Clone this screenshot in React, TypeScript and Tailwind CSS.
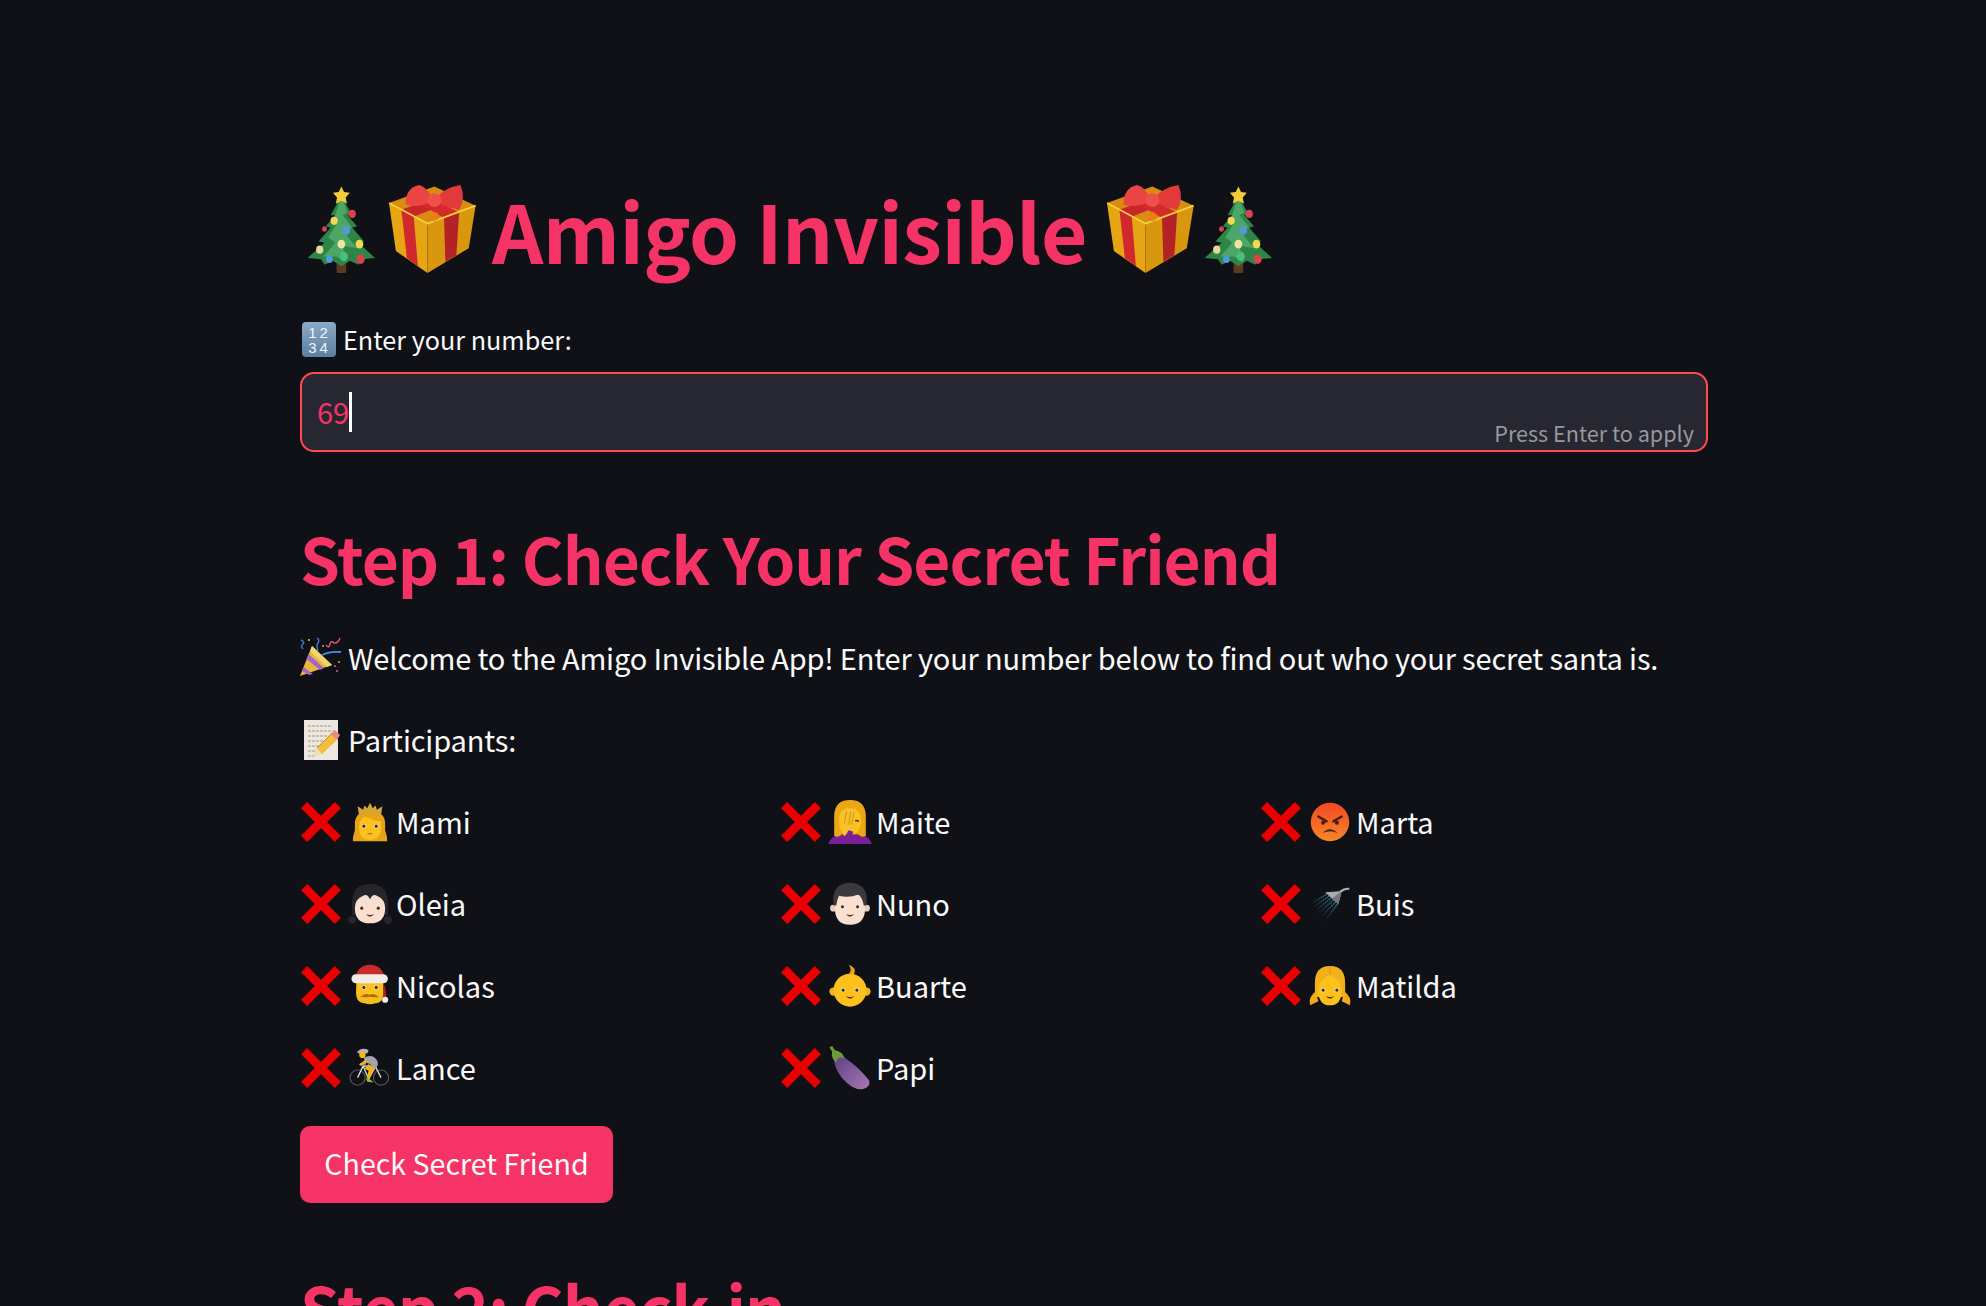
import type { ReactNode } from "react";

const FONT = "font-['Noto_Sans_CJK_SC','Liberation_Sans',sans-serif]";

function Svg({ className, children }: { className: string; children: ReactNode }) {
  return (
    <svg viewBox="0 0 64 64" className={`block shrink-0 ${className}`} aria-hidden="true">
      {children}
    </svg>
  );
}

function Cross() {
  return (
    <Svg className="ml-px h-10 w-10">
      <path d="M10 10 L54 54 M54 10 L10 54" stroke="#ea0000" strokeWidth="14" strokeLinecap="square" fill="none" />
    </Svg>
  );
}

function Tree({ className }: { className: string }) {
  return (
    <Svg className={className}>
      <g transform="translate(33 0) scale(0.875 1) translate(-33 0)">
        <rect x="29" y="54" width="8" height="10" rx="1" fill="#5c3a21" />
        <path d="M33 8 L42 22 L38 22 L46 30 L42 31 L52 41 L47 42 L61 53 L50 54 L47 58 L40 55 L33 59 L26 55 L19 58 L16 54 L5 53 L19 42 L14 41 L24 31 L20 30 L28 22 L24 22 Z" fill="#2f8448" />
        <path d="M33 8 L38 20 L34 22 L42 31 L34 33 L46 46 L34 44 L37 56 L29 52 L18 52 L28 42 L22 38 L30 27 L27 24 Z" fill="#4ca766" />
        <path d="M33 1 L35.2 5 L40 5.6 L36.6 9 L37.6 13.6 L33 11.4 L28.4 13.6 L29.4 9 L26 5.6 L30.8 5 Z" fill="#f4cc3a" />
        <circle cx="42" cy="21" r="3" fill="#d8434e" />
        <circle cx="27" cy="26" r="3" fill="#f0d954" />
        <circle cx="19" cy="32" r="2" fill="#d8434e" />
        <circle cx="37" cy="33" r="3.2" fill="#4f9bd9" />
        <circle cx="33" cy="43" r="3.2" fill="#f0e3a0" />
        <circle cx="48" cy="43" r="3.2" fill="#f2d94d" />
        <circle cx="15" cy="47" r="3" fill="#e6d79a" />
        <circle cx="35" cy="52" r="3.4" fill="#49c077" />
        <circle cx="49" cy="54" r="3.4" fill="#d8434e" />
        <circle cx="23" cy="54" r="2.8" fill="#4f9bd9" />
      </g>
    </Svg>
  );
}

function Gift({ className }: { className: string }) {
  return (
    <Svg className={className}>
      <path d="M0 13 L33 1 L63 15 L28 28 Z" fill="#d98c12" />
      <path d="M0 13 L28 28 L28 64 L5 48 Z" fill="#e8a513" />
      <path d="M63 15 L28 28 L28 64 L58 46 Z" fill="#d9960f" />
      <path d="M9 18 L18 23 L21 59 L13 53 Z" fill="#d0282c" />
      <path d="M40 24 L51 20 L49 51 L41 56 Z" fill="#b52225" />
      <path d="M9 18 L42 6 L51 10 L18 23 Z" fill="#c9262a" />
      <path d="M40 24 L51 20 L24 6 L14 9 Z" fill="#d42a2c" />
      <path d="M0 13 L28 28 L63 15" stroke="#f7d23e" strokeWidth="1.2" fill="none" />
      <path d="M29 13 Q18 17 12 14 Q12 2 22 0 Q28 2 31 9 Z" fill="#ea4544" />
      <path d="M35 9 Q40 2 52 0 Q56 10 51 18 Q42 16 35 13 Z" fill="#e23a3b" />
      <circle cx="33" cy="11" r="5" fill="#f0504c" />
      <circle cx="33" cy="23" r="3.5" fill="#ef7a18" opacity="0.7" />
    </Svg>
  );
}

function Numbers() {
  return (
    <svg viewBox="0 0 34 36" className="block h-9 w-[34px] shrink-0" aria-hidden="true">
      <defs>
        <linearGradient id="numBg" x1="0" y1="0" x2="0" y2="1">
          <stop offset="0" stopColor="#8aaac8" />
          <stop offset="1" stopColor="#5b7f9f" />
        </linearGradient>
      </defs>
      <rect width="34" height="35" rx="4" fill="url(#numBg)" />
      <text x="17.5" y="15.5" textAnchor="middle" fontSize="15" fill="#eef3f8" fontFamily="Liberation Sans" letterSpacing="3">12</text>
      <text x="17.5" y="31" textAnchor="middle" fontSize="15" fill="#eef3f8" fontFamily="Liberation Sans" letterSpacing="3">34</text>
    </svg>
  );
}

function Party() {
  return (
    <svg viewBox="0 0 42 42" className="block h-[42px] w-[42px] shrink-0" aria-hidden="true">
      <path d="M0 39 L12 9 L32 28 Z" fill="#e9b63e" />
      <path d="M8.5 17 L24 31 L20 33 L6.5 22 Z" fill="#a763c9" />
      <path d="M3.5 30 L13 37 L9 38 L2 34 Z" fill="#a763c9" />
      <path d="M12 9 L32 28 L27 30 L10 14 Z" fill="#f2d56e" />
      <path d="M1 3 Q5 5 3 7 Q0 9 3 12 M17 1 Q20 3 18 6 Q16 8 18 14" stroke="#3f7fe0" strokeWidth="1.4" fill="none" />
      <path d="M26 8 Q29 12 30 7 Q31 3 34 6 Q38 7 40 1" stroke="#e04f7d" strokeWidth="1.4" fill="none" />
      <path d="M22 18 Q30 14 41 15" stroke="#3f8ff0" strokeWidth="1.8" fill="none" />
      <circle cx="9" cy="3" r="1" fill="#f2d040" />
      <circle cx="39" cy="25" r="1" fill="#e8a13a" />
      <circle cx="37" cy="34" r="1" fill="#e0579a" />
      <circle cx="35" cy="29" r="1" fill="#e0579a" />
      <circle cx="23" cy="9" r="1" fill="#e8a13a" />
    </svg>
  );
}

function Memo() {
  return (
    <svg viewBox="0 0 36 40" className="block h-10 w-9 shrink-0" aria-hidden="true">
      <rect width="34" height="40" fill="#ece8df" />
      <path d="M4 6 H28 M4 11 H30 M4 16 H24 M4 21 H26 M4 26 H18 M4 31 H12 M4 36 H10" stroke="#8b8578" strokeWidth="0.8" strokeDasharray="3 1" />
      <path d="M10 36 L13 28 L28 13 L34 19 L18 34 Z" fill="#f2bd3c" />
      <path d="M10 36 L13 28 L18 34 Z" fill="#f3dfb5" />
      <path d="M27 14 L31 10 L36 15 L33 20 Z" fill="#e88a8a" />
      <path d="M13 28 L28 13" stroke="#c98a1e" strokeWidth="1" />
    </svg>
  );
}

function Eyes({ y = 34, cx = 32, gap = 10 }: { y?: number; cx?: number; gap?: number }) {
  return (
    <>
      <circle cx={cx - gap} cy={y} r="3.2" fill="#f3ead7" />
      <circle cx={cx + gap} cy={y} r="3.2" fill="#f3ead7" />
      <circle cx={cx - gap} cy={y} r="2.2" fill="#3d2a1c" />
      <circle cx={cx + gap} cy={y} r="2.2" fill="#3d2a1c" />
    </>
  );
}

function Smile({ y = 45 }: { y?: number }) {
  return <path d={`M26 ${y} Q32 ${y + 7} 38 ${y} Q32 ${y + 2} 26 ${y} Z`} fill="#6b3416" />;
}

function Princess() {
  return (
    <Svg className="h-11 w-11">
      <path d="M7 60 Q7 52 10 44 V32 Q12 16 32 16 Q52 16 54 32 V44 Q57 52 57 60 Z" fill="#e8a417" />
      <path d="M16 22 L14 9 L22 14 L24 8 L28 12 L32 4 L36 12 L40 8 L42 14 L50 9 L48 22 Q32 17 16 22 Z" fill="#d4a63a" />
      <path d="M16 38 Q17 26 26 24 Q36 31 48 31 V40 Q48 58 32 58 Q16 58 16 38 Z" fill="#fcc21b" />
      <Eyes y={38} gap={9} />
      <path d="M27 48 Q32 52 37 48 Q32 49 27 48 Z" fill="#a85a24" />
    </Svg>
  );
}

function Oleia() {
  return (
    <Svg className="h-11 w-11">
      <circle cx="6" cy="55" r="6" fill="#26262a" />
      <circle cx="58" cy="55" r="6" fill="#26262a" />
      <path d="M6 48 V30 Q6 3 32 3 Q58 3 58 30 V48 Z" fill="#26262a" />
      <path d="M10 38 Q10 25 22 20 Q28 16 32 25 Q36 16 42 20 Q54 25 54 38 Q54 60 32 60 Q10 60 10 38 Z" fill="#f8dfd0" />
      <Eyes y={38} gap={12} />
      <Smile y={47} />
    </Svg>
  );
}

function Santa() {
  return (
    <Svg className="h-11 w-11">
      <path d="M44 22 Q54 30 53 50" stroke="#a81f1f" strokeWidth="5" fill="none" />
      <circle cx="54" cy="52" r="4.5" fill="#ececec" />
      <path d="M12 36 V46 Q14 57 24 57 Q32 60 40 57 Q50 57 51 46 V36 Z" fill="#f5be1e" />
      <path d="M10 22 Q14 1 32 1 Q50 1 54 22 Z" fill="#c92a2a" />
      <path d="M12 26 H51 V44 H12 Z" fill="#fcc21b" />
      <rect x="5" y="15" width="53" height="13" rx="6.5" fill="#f0ece6" />
      <Eyes y={34} gap={9} />
      <path d="M18 48 Q26 41 31.5 45 Q37 41 45 48 Q38 49 31.5 47.5 Q25 49 18 48 Z" fill="#a8700f" />
    </Svg>
  );
}

function Cyclist() {
  return (
    <Svg className="h-11 w-11">
      <circle cx="14" cy="46" r="11" fill="none" stroke="#55585e" strokeWidth="1.6" />
      <circle cx="48" cy="46" r="11" fill="none" stroke="#55585e" strokeWidth="1.6" />
      <path d="M14 46 L22 29 L40 30 L48 46 M22 29 L30 48 L40 30 M18 26 H26" stroke="#e2e2e2" strokeWidth="1.8" fill="none" />
      <path d="M13 9 Q20 1 30 6 L28 11 L16 11 Z" fill="#b4b5b9" />
      <circle cx="21" cy="13" r="4.6" fill="#f4b818" />
      <path d="M23 17 Q36 10 43 22 Q45 30 38 34 L32 26 L25 24 Z" fill="#a2a4a9" />
      <path d="M16 27 L25 20 L28 23 L19 29 Z" fill="#f2b318" />
      <path d="M30 26 L39 33 L36 38 L31 48 L27 46 L30 36 L24 33 Z" fill="#f2b318" />
      <path d="M26 47 L33 49 L37 53 L28 52 Z" fill="#86c440" />
    </Svg>
  );
}

function Facepalm() {
  return (
    <Svg className="h-11 w-11">
      <path d="M0 64 Q4 52 18 50 L46 50 Q60 52 64 64 Z" fill="#7a1f96" />
      <path d="M9 52 V24 Q9 0 32 0 Q55 0 55 24 V52 Q50 56 44 50 H20 Q14 56 9 52 Z" fill="#eda616" />
      <path d="M16 30 Q16 12 32 12 Q48 12 48 30 Q48 50 32 50 Q16 50 16 30 Z" fill="#fcc21b" />
      <path d="M36 32 Q40 28 45 31" stroke="#3d2a1c" strokeWidth="2" fill="none" />
      <path d="M20 18 L28 11 L34 14 L40 12 L42 20 L37 40 L34 50 L24 54 L17 38 Z" fill="#f8c12a" />
      <path d="M27 16 L24 34 M33 17 L30 36 M38 18 L34 36" stroke="#c98d12" strokeWidth="1.2" fill="none" />
      <path d="M22 64 Q32 62 37 46 L30 44 Q26 54 12 60 Z" fill="#7a1f96" />
    </Svg>
  );
}

function Nuno() {
  return (
    <Svg className="h-11 w-11">
      <circle cx="8" cy="38" r="5" fill="#ecccba" />
      <circle cx="56" cy="38" r="5" fill="#ecccba" />
      <path d="M10 38 Q10 24 14 18 H50 Q54 24 54 38 Q54 62 32 62 Q10 62 10 38 Z" fill="#f8dfd0" />
      <path d="M8 34 Q4 2 32 1 Q60 2 56 34 L52 34 Q50 22 44 18 Q30 24 16 20 Q13 26 12 34 Z" fill="#3a3a3e" />
      <Eyes y={36} gap={11} />
      <Smile y={47} />
    </Svg>
  );
}

function Baby() {
  return (
    <Svg className="h-11 w-11">
      <circle cx="8" cy="40" r="6" fill="#eeb01b" />
      <circle cx="56" cy="40" r="6" fill="#eeb01b" />
      <circle cx="32" cy="38" r="24" fill="#fcc21b" />
      <path d="M30 1 Q42 5 38 15 Q34 16 30 15 Q36 8 30 1 Z" fill="#eba916" />
      <Eyes y={38} gap={10} />
      <Smile y={47} />
    </Svg>
  );
}

function Eggplant() {
  return (
    <Svg className="h-11 w-11">
      <defs>
        <linearGradient id="eggBody" x1="0" y1="0" x2="1" y2="1">
          <stop offset="0" stopColor="#5b3f83" />
          <stop offset="1" stopColor="#a878b4" />
        </linearGradient>
      </defs>
      <path d="M8 14 Q18 10 26 18 Q46 32 60 50 Q62 60 50 63 Q36 64 20 46 Q8 30 8 14 Z" fill="url(#eggBody)" />
      <path d="M2 2 L6 0 L10 6 Q22 8 24 18 Q14 14 12 24 Q4 18 6 8 Z" fill="#6d9b3a" />
    </Svg>
  );
}

function Angry() {
  return (
    <Svg className="h-11 w-11">
      <defs>
        <linearGradient id="angryBg" x1="0" y1="0" x2="0" y2="1">
          <stop offset="0" stopColor="#f24a23" />
          <stop offset="1" stopColor="#f7862a" />
        </linearGradient>
      </defs>
      <circle cx="32" cy="32" r="28" fill="url(#angryBg)" />
      <path d="M15 24 L27 31 M49 24 L37 31" stroke="#4e1c0c" strokeWidth="3.6" strokeLinecap="round" />
      <circle cx="22" cy="33" r="3" fill="#4e1c0c" />
      <circle cx="42" cy="33" r="3" fill="#4e1c0c" />
      <path d="M21 48 Q32 37 43 48 Q32 43 21 48 Z" fill="#4e1c0c" />
    </Svg>
  );
}

function Shower() {
  return (
    <Svg className="h-11 w-11">
      <defs>
        <linearGradient id="spray" gradientUnits="userSpaceOnUse" x1="38" y1="22" x2="14" y2="46">
          <stop offset="0" stopColor="#2f9fb4" />
          <stop offset="1" stopColor="#2f9fb4" stopOpacity="0" />
        </linearGradient>
      </defs>
      <path
        d="M28 17 L6 31 M31 20 L9 36 M34 23 L12 41 M37 26 L15 46 M40 29 L19 51 M43 32 L24 57"
        stroke="url(#spray)"
        strokeWidth="2.2"
        strokeDasharray="2 1.2"
        fill="none"
      />
      <path d="M25 15 L44 32 Q46 26 49 13 Q36 14 25 15 Z" fill="#a9abae" />
      <path d="M35 24 L44 32 Q46 26 49 13 Z" fill="#76787c" />
      <path d="M47 14 Q53 9 60 10" stroke="#b0b2b5" strokeWidth="3" fill="none" />
    </Svg>
  );
}

function Girl() {
  return (
    <Svg className="h-11 w-11">
      <path d="M11 40 Q0 48 3 60 L15 54 Z M53 40 Q64 48 61 60 L49 54 Z" fill="#efaa18" />
      <path d="M10 48 V28 Q10 3 32 3 Q54 3 54 28 V48 Z" fill="#f2b01e" />
      <path d="M15 38 Q15 24 32 16 Q49 24 49 38 Q49 60 32 60 Q15 60 15 38 Z" fill="#fcc21b" />
      <path d="M32 4 V16" stroke="#d9930f" strokeWidth="1.2" />
      <Eyes y={38} gap={10} />
      <Smile y={47} />
    </Svg>
  );
}

const people: { name: string; icon: ReactNode }[] = [
  { name: "Mami", icon: <Princess /> },
  { name: "Maite", icon: <Facepalm /> },
  { name: "Marta", icon: <Angry /> },
  { name: "Oleia", icon: <Oleia /> },
  { name: "Nuno", icon: <Nuno /> },
  { name: "Buis", icon: <Shower /> },
  { name: "Nicolas", icon: <Santa /> },
  { name: "Buarte", icon: <Baby /> },
  { name: "Matilda", icon: <Girl /> },
  { name: "Lance", icon: <Cyclist /> },
  { name: "Papi", icon: <Eggplant /> },
];

export default function App() {
  return (
    <div className={`h-[1306px] overflow-hidden bg-[#0f1116] text-[#fafafa] ${FONT}`}>
      <main className="ml-[300px] w-[1408px] pt-[170px]">
        <h1 className="flex h-[118px] items-center text-[80px] font-bold leading-none tracking-[-0.5px] text-[#f63366]">
          <Tree className="-ml-[4px] h-[88px] w-[88px]" />
          <Gift className="ml-[5px] h-[88px] w-[88px]" />
          <span className="ml-[15px]">Amigo Invisible</span>
          <Gift className="ml-[20px] h-[88px] w-[88px]" />
          <Tree className="-ml-[2px] h-[88px] w-[88px]" />
        </h1>

        <label className="mt-[30px] flex h-[44px] items-center text-[25.2px]">
          <span className="ml-[2px]"><Numbers /></span>
          <span className="ml-[7px] pb-[1px]">Enter your number:</span>
        </label>

        <div className="relative mt-[10px] flex h-[80px] items-center rounded-[14px] border-2 border-[#ff4b4b] bg-[#262730] px-[15px]">
          <span className="pb-[2px] text-[29px] leading-none text-[#f63366]">69</span>
          <span className="h-[40px] w-[3px] bg-white" />
          <span className="absolute bottom-[1px] right-[12px] text-[21.6px] leading-[32px] text-[#97979c]">Press Enter to apply</span>
        </div>

        <h2 className="mt-[47px] flex h-[116px] items-center text-[64px] font-semibold leading-none tracking-[-1px] text-[#f63366]">
          Step 1: Check Your Secret Friend
        </h2>

        <p className="mt-[2px] flex h-[82px] items-center text-[29px]">
          <Party />
          <span className="ml-[6px] tracking-[-0.17px]">Welcome to the Amigo Invisible App! Enter your number below to find out who your secret santa is.</span>
        </p>

        <p className="flex h-[82px] items-center text-[29px]">
          <span className="ml-[4px]"><Memo /></span>
          <span className="ml-[8px] tracking-[-0.15px]">Participants:</span>
        </p>

        <div className="grid grid-cols-3 gap-x-8">
          {people.map((p) => (
            <div key={p.name} className="flex h-[82px] items-center text-[29px]">
              <Cross />
              <span className="ml-[7px]">{p.icon}</span>
              <span className="ml-[4px]">{p.name}</span>
            </div>
          ))}
        </div>

        <button className="mt-[17px] flex h-[77px] w-[313px] items-center justify-center rounded-[10px] bg-[#f63366] pb-[2px] text-[28.6px] text-[#fafafa]">
          Check Secret Friend
        </button>

        <h2 className="mt-[58px] text-[64px] font-semibold leading-[90px] tracking-[-1px] text-[#f63366]">Step 2: Check-in</h2>
      </main>
    </div>
  );
}
